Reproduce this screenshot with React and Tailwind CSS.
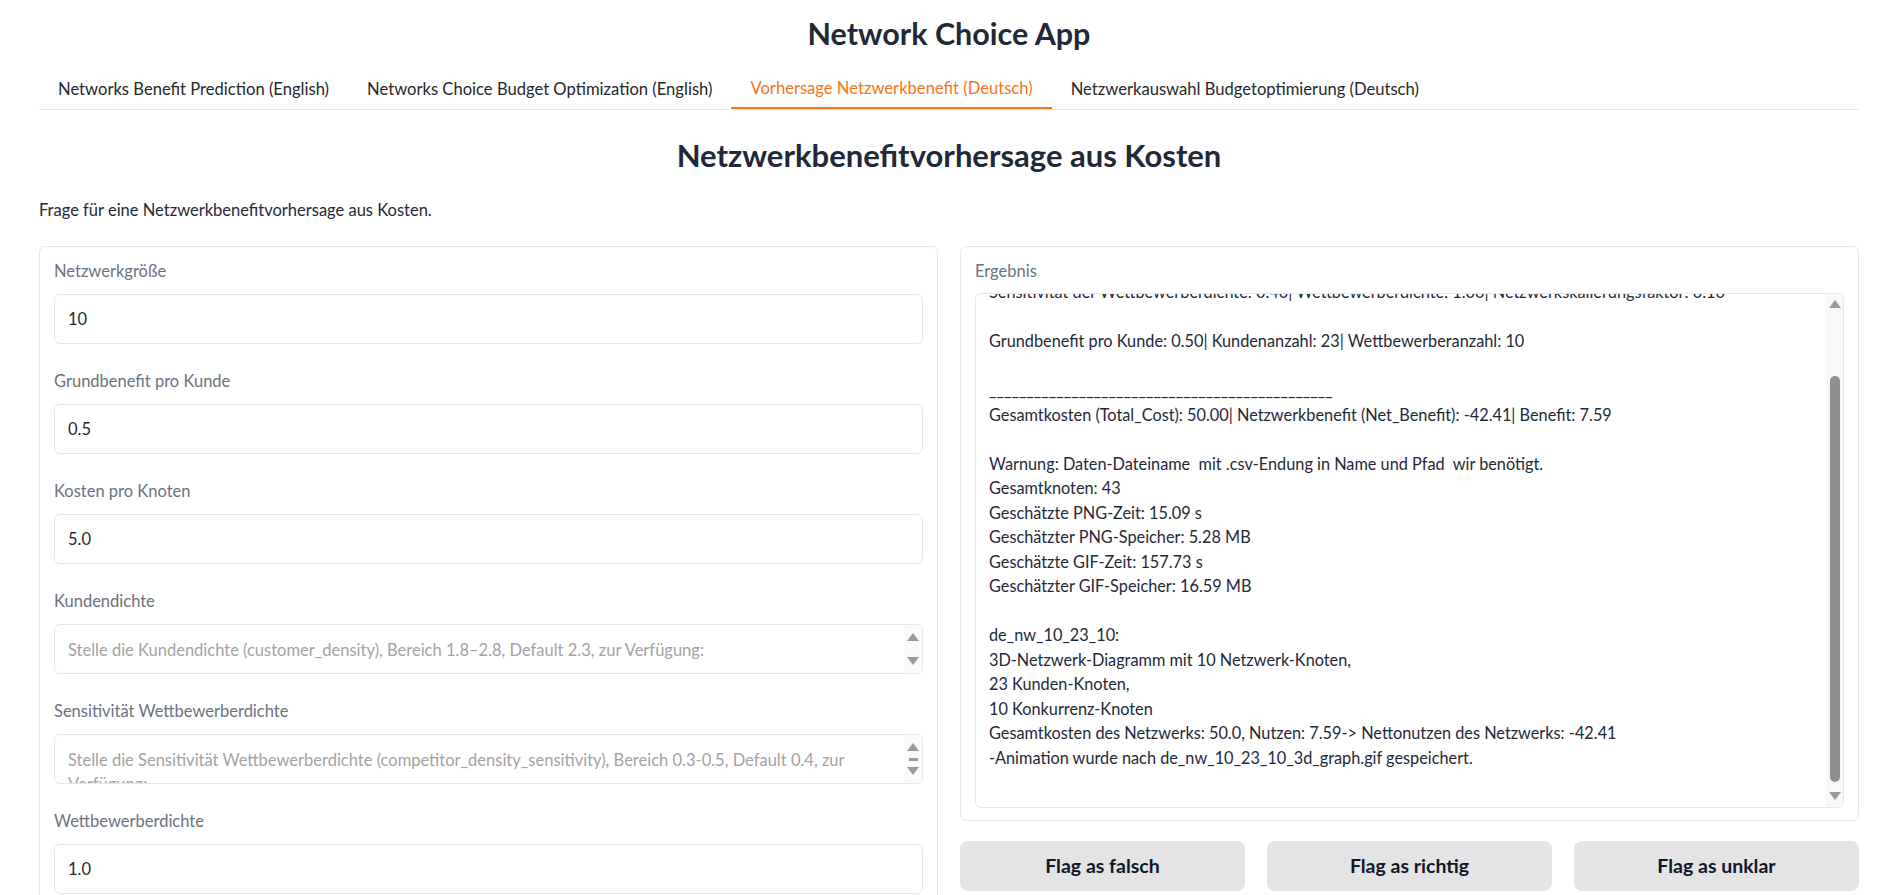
import React from "react";

const tabs = [
  { label: "Networks Benefit Prediction (English)", active: false },
  { label: "Networks Choice Budget Optimization (English)", active: false },
  { label: "Vorhersage Netzwerkbenefit (Deutsch)", active: true },
  { label: "Netzwerkauswahl Budgetoptimierung (Deutsch)", active: false },
];

const outputLines = [
  "Sensitivität der Wettbewerberdichte: 0.40| Wettbewerberdichte: 1.00| Netzwerkskalierungsfaktor: 0.10",
  "",
  "Grundbenefit pro Kunde: 0.50| Kundenanzahl: 23| Wettbewerberanzahl: 10",
  "",
  "______________________________________________",
  "Gesamtkosten (Total_Cost): 50.00| Netzwerkbenefit (Net_Benefit): -42.41| Benefit: 7.59",
  "",
  "Warnung: Daten-Dateiname  mit .csv-Endung in Name und Pfad  wir benötigt.",
  "Gesamtknoten: 43",
  "Geschätzte PNG-Zeit: 15.09 s",
  "Geschätzter PNG-Speicher: 5.28 MB",
  "Geschätzte GIF-Zeit: 157.73 s",
  "Geschätzter GIF-Speicher: 16.59 MB",
  "",
  "de_nw_10_23_10:",
  "3D-Netzwerk-Diagramm mit 10 Netzwerk-Knoten,",
  "23 Kunden-Knoten,",
  "10 Konkurrenz-Knoten",
  "Gesamtkosten des Netzwerks: 50.0, Nutzen: 7.59-> Nettonutzen des Netzwerks: -42.41",
  "-Animation wurde nach de_nw_10_23_10_3d_graph.gif gespeichert.",
  "",
];

function Up({ className = "" }) {
  return (
    <svg width="12" height="8" viewBox="0 0 12 8" className={className}>
      <path d="M6 0 L12 8 L0 8 Z" fill="#9a9a9a" />
    </svg>
  );
}
function Down({ className = "" }) {
  return (
    <svg width="12" height="8" viewBox="0 0 12 8" className={className}>
      <path d="M0 0 L12 0 L6 8 Z" fill="#9a9a9a" />
    </svg>
  );
}

function Label({ children }) {
  return <div className="text-[16.5px] leading-[24px] text-[#6b7280]">{children}</div>;
}

function NumberField({ label, value }) {
  return (
    <div className="flex flex-col gap-[11px]">
      <Label>{label}</Label>
      <div className="h-[50px] rounded-md border border-[#e5e7eb] px-[13px] flex items-center text-[16.5px] text-[#1f2937]">
        {value}
      </div>
    </div>
  );
}

function TextField({ label, placeholder, thumb }) {
  return (
    <div className="flex flex-col gap-[11px]">
      <Label>{label}</Label>
      <div className="h-[50px] rounded-md border border-[#e5e7eb] flex overflow-hidden">
        <div className="flex-1 overflow-hidden pl-[13px] pr-[40px] pt-[13px] text-[16.5px] leading-[24px] text-[#a3a3a3]">
          {placeholder}
        </div>
        <div className="w-[18px] bg-[#fafafa] flex flex-col items-center justify-between py-[8px]">
          <Up />
          {thumb ? <div className="w-[9px] h-[3px] bg-[#9a9a9a]" /> : null}
          <Down />
        </div>
      </div>
    </div>
  );
}

export default function App() {
  return (
    <div className="min-h-screen bg-white font-['Lato',sans-serif] text-[#1f2937]">
      <div className="w-[1820px] mx-auto">
        <h1 className="pt-[14px] text-center text-[30.5px] leading-[38px] font-bold text-[#1f2937]">
          Network Choice App
        </h1>

        <div className="mt-[17px] flex border-b border-[#e5e7eb]">
          {tabs.map((t) => (
            <div
              key={t.label}
              className={
                t.active
                  ? "h-[40px] px-[19px] flex items-center text-[16.6px] text-[#f97316] border-b-2 border-[#f97316] -mb-px"
                  : "h-[40px] px-[19px] flex items-center text-[16.6px] text-[#27272a]"
              }
            >
              {t.label}
            </div>
          ))}
        </div>

        <h2 className="mt-[26px] text-center text-[31px] leading-[38px] font-bold text-[#1f2937]">
          Netzwerkbenefitvorhersage aus Kosten
        </h2>

        <p className="mt-[24px] text-[16.5px] leading-[24px] text-[#1f2937]">
          Frage für eine Netzwerkbenefitvorhersage aus Kosten.
        </p>

        <div className="mt-[24px] grid grid-cols-2 gap-[22px] items-start">
          <div className="rounded-md border border-[#e5e7eb] px-[14px] pt-[12px] pb-[16px] flex flex-col gap-[25px]">
            <NumberField label="Netzwerkgröße" value="10" />
            <NumberField label="Grundbenefit pro Kunde" value="0.5" />
            <NumberField label="Kosten pro Knoten" value="5.0" />
            <TextField
              label="Kundendichte"
              placeholder="Stelle die Kundendichte (customer_density), Bereich 1.8–2.8, Default 2.3, zur Verfügung:"
            />
            <TextField
              label="Sensitivität Wettbewerberdichte"
              placeholder="Stelle die Sensitivität Wettbewerberdichte (competitor_density_sensitivity), Bereich 0.3-0.5, Default 0.4, zur Verfügung:"
              thumb
            />
            <NumberField label="Wettbewerberdichte" value="1.0" />
            <NumberField label="Netzwerkskalierungsfaktor" value="0.1" />
          </div>

          <div className="flex flex-col gap-[20px]">
            <div className="rounded-md border border-[#e5e7eb] px-[14px] pt-[12px] pb-[12px] flex flex-col gap-[10px]">
              <Label>Ergebnis</Label>
              <div className="h-[515px] rounded-md border border-[#e5e7eb] flex overflow-hidden">
                <div className="flex-1 overflow-hidden pl-[13px]">
                  <div className="-mt-[14px] text-[16.3px] leading-[24.5px] text-[#1f2937] whitespace-pre">
                    {outputLines.map((l, i) => (
                      <div key={i} className="h-[24.5px]">
                        {l}
                      </div>
                    ))}
                  </div>
                </div>
                <div className="w-[17px] bg-[#f8f8f8] flex flex-col items-center">
                  <Up className="mt-[6px]" />
                  <div className="mt-[68px] w-[10px] h-[406px] rounded-full bg-[#8f8f8f]" />
                  <Down className="mt-[10px]" />
                </div>
              </div>
            </div>

            <div className="grid grid-cols-3 gap-[22px]">
              {["Flag as falsch", "Flag as richtig", "Flag as unklar"].map((b) => (
                <button
                  key={b}
                  className="h-[50px] rounded-lg bg-[#e4e4e7] text-[19.5px] font-bold text-[#111827]"
                >
                  {b}
                </button>
              ))}
            </div>
          </div>
        </div>
      </div>
    </div>
  );
}
